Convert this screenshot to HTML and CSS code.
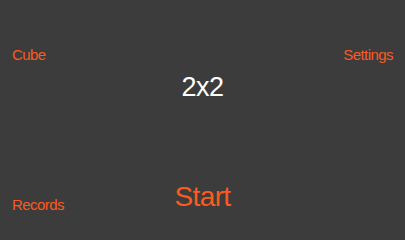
FILE: index.html
```html
<!DOCTYPE html>
<html lang="en">
<head>
<meta charset="utf-8">
<title>Cube Timer</title>
<link rel="stylesheet" href="styles.css">
</head>
<body>
<main class="screen">
  <div class="top-row">
    <span class="link">Cube</span>
    <span class="link">Settings</span>
  </div>
  <div class="title">2x2</div>
  <div class="bottom-row">
    <span class="link records">Records</span>
    <span class="start">Start</span>
    <span></span>
  </div>
</main>
</body>
</html>
```

FILE: styles.css
```css
html, body {
  margin: 0;
  padding: 0;
  background: #3c3c3c;
}

.screen {
  width: 405px;
  height: 228px;
  display: flex;
  flex-direction: column;
  font-family: "Liberation Sans", Arial, sans-serif;
  line-height: 1;
  overflow: hidden;
}

.top-row {
  margin-top: 47px;
  display: flex;
  justify-content: space-between;
  padding: 0 12px 0 12px;
}

.link {
  color: #fc5a1f;
  font-size: 15px;
  letter-spacing: -0.55px;
}

.title {
  margin-top: 12px;
  text-align: center;
  color: #ffffff;
  font-size: 27px;
  letter-spacing: -0.5px;
}

.bottom-row {
  margin-top: 82px;
  display: grid;
  grid-template-columns: 1fr auto 1fr;
  align-items: start;
  padding: 0 12px;
}

.records {
  margin-top: 14px;
  justify-self: start;
}

.start {
  color: #fc5a1f;
  font-size: 28px;
  letter-spacing: -0.6px;
}
```
